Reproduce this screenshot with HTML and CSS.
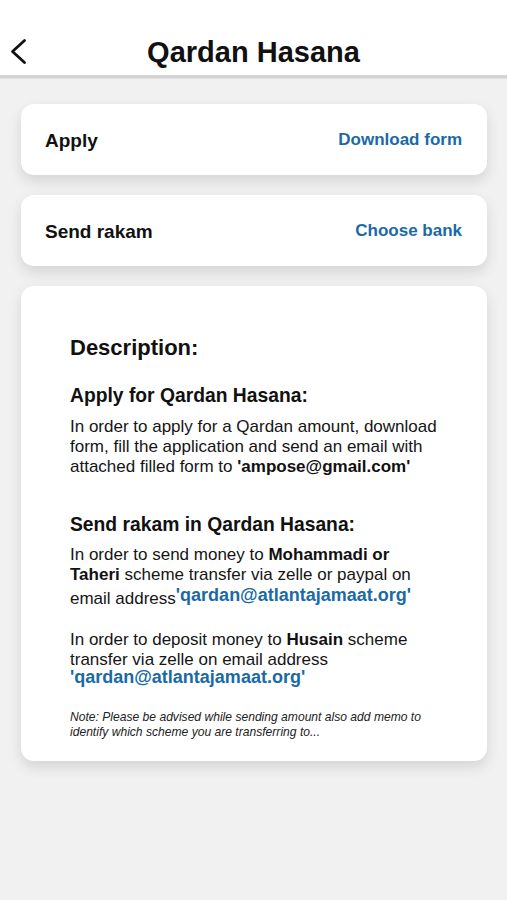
FILE: index.html
```html
<!DOCTYPE html>
<html lang="en">
<head>
<meta charset="utf-8">
<title>Qardan Hasana</title>
<link rel="stylesheet" href="styles.css">
</head>
<body>
<header class="topbar">
  <div class="back">
    <svg width="20" height="28" viewBox="0 0 20 28" aria-hidden="true">
      <polyline points="15.5,2.5 3.5,13.5 15.5,24.5" fill="none" stroke="#111" stroke-width="2.8" stroke-linecap="round" stroke-linejoin="round"/>
    </svg>
  </div>
  <h1 class="title">Qardan Hasana</h1>
  <div></div>
</header>
<main class="content">
  <section class="card row">
    <span class="row-label">Apply</span>
    <span class="row-link">Download form</span>
  </section>
  <section class="card row">
    <span class="row-label">Send rakam</span>
    <span class="row-link">Choose bank</span>
  </section>
  <section class="card desc">
    <h2 class="desc-title">Description:</h2>
    <h3 class="desc-head first">Apply for Qardan Hasana:</h3>
    <p class="para">In order to apply for a Qardan amount, download form, fill the application and send an email with attached filled form to <b>'ampose@gmail.com'</b></p>
    <h3 class="desc-head second">Send rakam in Qardan Hasana:</h3>
    <p class="para">In order to send money to <b>Mohammadi or Taheri</b> scheme transfer via zelle or paypal on email address<span class="email raised">'qardan@atlantajamaat.org'</span></p>
    <p class="para gap">In order to deposit money to <b>Husain</b> scheme transfer via zelle on email address</p>
    <p class="email-line"><span class="email">'qardan@atlantajamaat.org'</span></p>
    <p class="note">Note: Please be advised while sending amount also add memo to identify which scheme you are transferring to...</p>
  </section>
</main>
</body>
</html>
```
FILE: styles.css
```css
* { box-sizing: border-box; }
html, body {
  margin: 0;
  padding: 0;
}
body {
  background: #f1f1f1;
  font-family: "Liberation Sans", Arial, sans-serif;
  color: #111;
  width: 507px;
  min-height: 900px;
}
.topbar {
  background: #fff;
  padding-top: 30px;
  height: 78px;
  display: grid;
  grid-template-columns: 1fr auto 1fr;
  align-items: start;
  border-bottom: 3px solid #d4d4d4;
  box-shadow: 0 1px 1px rgba(0,0,0,0.06);
}
.back {
  padding-left: 9px;
  padding-top: 8px;
  display: flex;
}
.title {
  margin: 0;
  font-size: 29px;
  font-weight: bold;
  line-height: 44px;
  color: #111;
}
.content {
  padding: 26px 20px 0 21px;
  display: flex;
  flex-direction: column;
  gap: 20px;
}
.card {
  background: #fff;
  border-radius: 13px;
  box-shadow: 0 6px 14px rgba(0,0,0,0.12);
}
.row {
  height: 71px;
  display: flex;
  justify-content: space-between;
  align-items: center;
  padding: 0 25px 0 24px;
}
.row-label {
  font-size: 19px;
  font-weight: bold;
  color: #111;
  padding-top: 3px;
}
.row-link {
  font-size: 17px;
  font-weight: bold;
  color: #1a6aa6;
}
.desc {
  padding: 49px 46px 22px 49px;
  height: 475px;
}
.desc-title {
  margin: 0;
  font-size: 22px;
  line-height: 26px;
  font-weight: bold;
}
.desc-head {
  margin: 0;
  font-size: 19.3px;
  line-height: 24px;
  font-weight: bold;
}
.desc-head.first { margin-top: 23px; margin-bottom: 9px; }
.desc-head.second { margin-top: 36px; margin-bottom: 8px; }
.para {
  margin: 0;
  font-size: 17px;
  line-height: 20px;
  color: #151515;
}
.para b { color: #111; }
.para.gap { margin-top: 21px; }
.email {
  font-size: 18px;
  font-weight: bold;
  color: #1a6aa6;
  white-space: nowrap;
}
.email.raised { vertical-align: 3px; }
.email-line {
  margin: 0;
  line-height: 14px;
}
.note {
  margin: 25px 0 0;
  font-size: 12.1px;
  line-height: 15px;
  font-style: italic;
  color: #222;
}
```
